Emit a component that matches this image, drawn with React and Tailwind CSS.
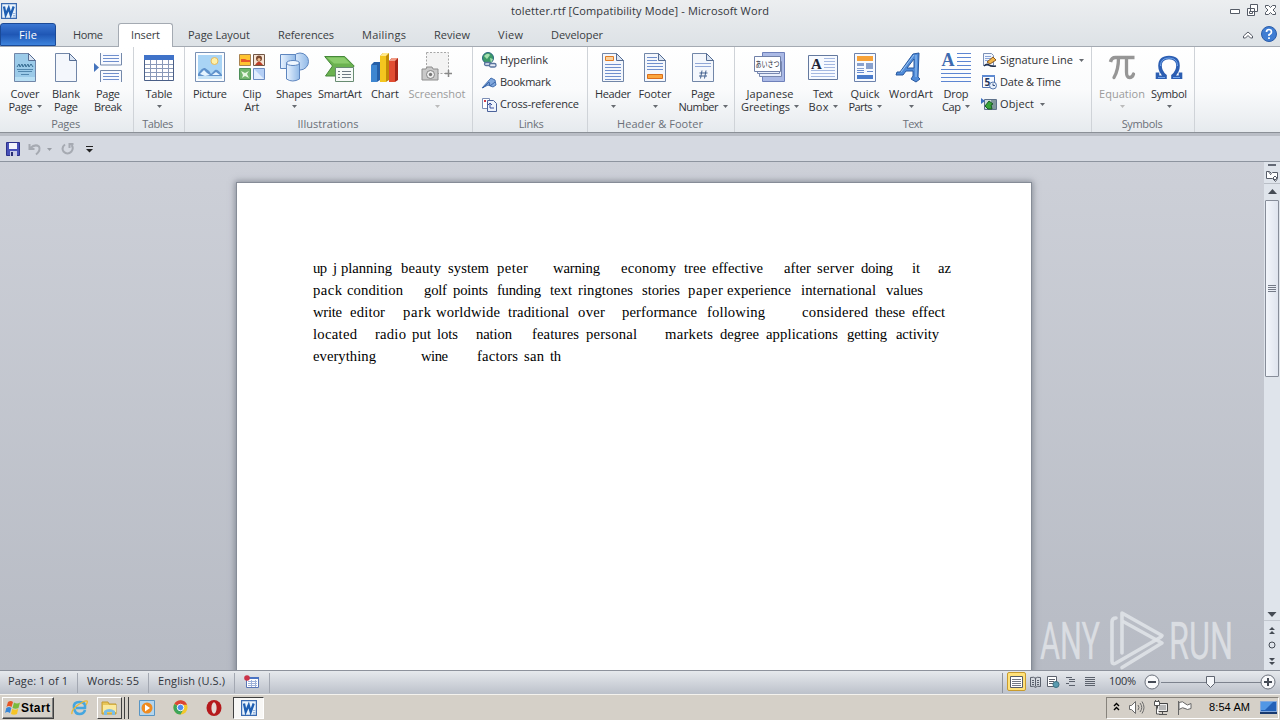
import React, { useLayoutEffect, useRef } from "react";

const UI = "font-['Open_Sans',sans-serif]";

/* Text run whose tracking is adjusted so that it spans exactly `w` pixels. */
function Fit({ w, className = "", children }) {
  const ref = useRef(null);
  useLayoutEffect(() => {
    const el = ref.current;
    el.style.letterSpacing = "0px";
    el.style.width = "auto";
    const natural = el.getBoundingClientRect().width;
    const n = String(children).length;
    if (n > 1) el.style.letterSpacing = (w - natural) / (n - 1) + "px";
    el.style.width = w + "px";
  }, [w, children]);
  return (
    <span ref={ref} className={"inline-block whitespace-pre shrink-0 " + className}>
      {children}
    </span>
  );
}

function Arrow({ className = "" }) {
  return (
    <svg className={"inline-block shrink-0 " + className} width="5" height="3" viewBox="0 0 5 3">
      <path d="M0 0h5L2.500 3z" fill="currentColor" />
    </svg>
  );
}

const Svg = ({ s = 32, children }) => (
  <svg width={s} height={s} viewBox={`0 0 ${s} ${s}`} className="shrink-0">{children}</svg>
);

function Sheet({ x = 5, fill = "#f4f7fc", children }) {
  return (
    <>
      <path d={`M${x}.5 1.500h14l7 7v21h-21z`} fill={fill} stroke="#7186a8" />
      <path d={`M${x + 14}.5 1.500v7h7z`} fill="#dbe5f3" stroke="#566d93" />
      {children}
    </>
  );
}

const CoverIcon = () => (
  <Svg><Sheet fill="#9ccbe9">
    <path d="M8 15l2-3 1 3 2-3 1 3 2-3 1 3 2-3 1 3 2-3 2 3" stroke="#376d93" fill="none" />
    <path d="M8 17.500h16M9 19.500h14M12 22.500h8" stroke="#5388ae" />
    <path d="M6 25h20v4H6z" fill="#b8dff4" />
  </Sheet></Svg>
);
const BlankIcon = () => <Svg><Sheet /></Svg>;
const BreakIcon = () => (
  <Svg>
    <path d="M8.500 1v12h21V1M8.500 30V18.500h21V30" fill="#f8faff" stroke="#7489ab" />
    <path d="M11 3.500h16M11 6.500h16M11 9.500h16M11 21.500h16M11 24.500h16M11 27.500h16" stroke="#6f8fcd" />
    <path d="M2 11l5 4.500L2 20z" fill="#4574bd" />
  </Svg>
);
const TableIcon = () => (
  <Svg>
    <path d="M1.500 3.500h29v25h-29z" fill="#fff" stroke="#4a5f87" />
    <path d="M1 3h30v5H1z" fill="#3f72c8" />
    <path d="M2 12.500h28M2 16.500h28M2 20.500h28M2 24.500h28M7.500 8v20M13.500 8v20M19.500 8v20M25.500 8v20" stroke="#8a99b8" />
  </Svg>
);
const PictureIcon = () => (
  <Svg>
    <path d="M1.500.5h29v29h-29z" fill="#fbfdff" stroke="#7890b4" />
    <path d="M4 3h24v21H4z" fill="#a9d4f5" />
    <circle cx="20.500" cy="9" r="3.500" fill="#fff0a8" stroke="#e5b85c" />
    <path d="M4 22q4-7 7-6 4 2 6 6l4-4q3-1 7 5v2H4z" fill="#5f92cc" />
    <path d="M6 22l4-4 3 3 3 2-5 1zM18 23l4-3 4 3z" fill="#e6f4ff" />
    <path d="M4 24h24v3H4z" fill="#c5e2f7" />
  </Svg>
);
const ClipIcon = () => (
  <Svg>
    <path d="M3.500 2.500h11v11h-11z" fill="#ffc431" stroke="#a98250" />
    <path d="M5 7h4l2 1h3v2H5z" fill="#e7572a" />
    <path d="M17.500 2.500h11v11h-11z" fill="#f5e3d4" stroke="#715746" />
    <circle cx="23" cy="6.500" r="3" fill="#7c4a30" /><path d="M19 13q4-7 8 0z" fill="#bc3e27" /><circle cx="23" cy="7.500" r="1.500" fill="#f1bd8d" />
    <path d="M3.500 16.500h11v11h-11z" fill="#72b56d" stroke="#4d8f59" />
    <path d="M5 19l4 2 4-2-2 3 2 4-4-2-3 2 1-3z" fill="#e7f7e2" />
    <path d="M17.500 16.500h11v11h-11z" fill="#b4cff5" stroke="#6b8bc0" /><path d="M18 17l10 10H18z" fill="#e1edfd" />
  </Svg>
);
const ShapesIcon = () => (
  <Svg>
    <defs><linearGradient id="sh"><stop stopColor="#e9f3ff" /><stop offset="1" stopColor="#91b9e7" /></linearGradient></defs>
    <circle cx="22" cy="9.500" r="8.500" fill="url(#sh)" stroke="#5e86bf" />
    <path d="M2.500 2.500h15v14h-15z" fill="url(#sh)" stroke="#5e86bf" />
    <path d="M8.500 11v16q6 4 13 0V11z" fill="url(#sh)" stroke="#5e86bf" />
    <ellipse cx="15" cy="11" rx="6.500" ry="2.500" fill="#f0f7ff" stroke="#5e86bf" />
  </Svg>
);
const SmartIcon = () => (
  <Svg>
    <path d="M.7 4.500h20l9.500 9.500-9 10H1.500l7-10z" fill="#6bb250" stroke="#45883a" />
    <path d="M3 5.500h17l6 6H10z" fill="#8bcc6d" />
    <path d="M11.500 15.500h18v14h-18z" fill="#f6faf7" stroke="#688c72" />
    <path d="M14 19.500h2m2 0h9M14 22.500h2m2 0h9M14 25.500h2m2 0h9" stroke="#6d7b82" />
  </Svg>
);
const ChartIcon = () => (
  <Svg>
    <path d="M2 13l3-3h6v18l-3 2H2z" fill="#255fa8" /><path d="M2 13h6v17H2z" fill="#3e86d0" />
    <path d="M11 4l3-3h6v27l-3 2h-6z" fill="#c28c05" /><path d="M11 4h6v26h-6z" fill="#f4c61f" /><path d="M11 4l3-3h6l-3 3z" fill="#ffe98b" />
    <path d="M20 9l3-3h6v22l-3 2h-6z" fill="#a62416" /><path d="M20 9h6v21h-6z" fill="#e24d31" /><path d="M20 9l3-3h6l-3 3z" fill="#f29a83" />
  </Svg>
);
const ScreenshotIcon = () => (
  <Svg>
    <path d="M5.500.5h22v21h-22z" fill="#f3f3f3" stroke="#a6a6a6" strokeDasharray="2 1.500" />
    <path d="M1 17h4l1-2h5l1 2h5v11H1z" fill="#c9c9c9" stroke="#8d8d8d" />
    <circle cx="9.500" cy="22.500" r="4" fill="#eee" stroke="#858585" /><circle cx="9.500" cy="22.500" r="1.700" fill="#777" />
    <path d="M27.500 18v7M24 21.500h7" stroke="#888" strokeWidth="1.500" />
  </Svg>
);
const PageLines = ({ from, to }) => {
  const rows = [];
  for (let y = from; y <= to; y += 3) rows.push(<path key={y} d={`M8 ${y + 0.5}h16`} stroke="#6f8fcd" />);
  return rows;
};
const HeaderIcon = () => <Svg><Sheet><PageLines from={12} to={27} /><path d="M8.500 4.500h8v4h-8z" fill="#fbd29e" stroke="#e07c25" /></Sheet></Svg>;
const FooterIcon = () => <Svg><Sheet><path d="M8 5.500h10M8 8.500h10" stroke="#6f8fcd" /><PageLines from={11} to={18} /><path d="M8.500 22.500h15v4h-15z" fill="#fba63f" stroke="#d96e1c" /></Sheet></Svg>;
const NumberIcon = () => <Svg><Sheet><path d="M8 11.500h16M8 14.500h16" stroke="#91a7d6" /><path d="M15 18.500l-1.500 8M19 18.500l-1.500 8M12.500 21h8M12 24h8" stroke="#42618f" /></Sheet></Svg>;
const JapaneseIcon = () => (
  <Svg>
    <path d="M8.500.5h22v29h-22z" fill="#aab9e5" stroke="#6e80ba" />
    <path d="M5.500 9.500h22v15h-22z" fill="#e8eefb" stroke="#7787b0" /><path d="M3.500 7.500h22v14h-22z" fill="#e8eefb" stroke="#7787b0" />
    <path d="M.5 4.500h26v15H.5z" fill="#fdfeff" stroke="#7080a8" />
    <text x="1.500" y="15" fontSize="8" textLength="24" lengthAdjust="spacingAndGlyphs" fontFamily="Noto Sans CJK JP, sans-serif" fill="#1c2233">あいさつ</text>
  </Svg>
);
const TextBoxIcon = () => (
  <Svg>
    <path d="M1.500 3.500h29v24h-29z" fill="#f7faff" stroke="#64799f" />
    <text x="4" y="17" fontSize="15" fontWeight="700" fontFamily="Liberation Serif, serif" fill="#1b2438">A</text>
    <path d="M17 6.500h11M17 9.500h11M17 12.500h11M17 15.500h11M4 18.500h24M4 21.500h24M4 24.500h24" stroke="#a4b8e1" />
  </Svg>
);
const QuickIcon = () => (
  <Svg>
    <path d="M5.500 1.500h21v28h-21z" fill="#f7faff" stroke="#6c82ac" />
    <path d="M8 4h16v5H8z" fill="#f7a238" /><path d="M8 11h7v3H8zM17 11h7v6h-7zM8 16h7v1H8z" fill="#88a1ce" />
    <path d="M8 18.500h7M18 19.500h6M8 20.500h7" stroke="#688bce" /><path d="M8 23h16v4H8z" fill="#497bcb" />
  </Svg>
);
const WordArtIcon = () => (
  <Svg>
    <path d="M2 20h3L18 2l6-1-1 24 2 2-4 3-5-3 2-3v-5h-7l-3 4H1zM12 16h7V7z" fill="#4f8bd8" stroke="#2859a0" fillRule="evenodd" />
    <path d="M6 20L19 3M21 3v22" fill="none" stroke="#9cc6f3" />
  </Svg>
);
const DropCapIcon = () => (
  <Svg>
    <text x="1.500" y="14" fontSize="18" fontWeight="700" fontFamily="Liberation Serif, serif" fill="#3d6bb0">A</text>
    <path d="M17 1.500h14M17 5.500h14M17 9.500h14M17 13.500h14M1 17.500h30M1 21.500h30M1 25.500h30M1 29.500h30" stroke="#5d86d2" />
  </Svg>
);
const PiIcon = () => (
  <Svg>
    <path d="M4.500 10q1-4.500 5-4.500h19" stroke="#969696" strokeWidth="3.500" fill="none" />
    <path d="M12.500 6q0 12-4.500 19.500M20.500 6v14q0 5.500 3 5.500t4-3.500" stroke="#969696" strokeWidth="3.300" strokeLinecap="round" fill="none" />
  </Svg>
);
const OmegaIcon = () => (
  <Svg>
    <path d="M4.500 20.500v4.800h7.500v-1.500q-5-4-5-10Q7 5.500 16 5.500t9 8.300q0 6-5 10v1.500h7.500v-4.800" stroke="#2c5eb2" strokeWidth="3.600" fill="none" />
    <path d="M5 25.500h7M7.500 14Q7.500 6 16 6t8.500 8M20 25.500h7" stroke="#6ea3ec" fill="none" />
  </Svg>
);

const LinkIcon = () => (
  <Svg s={16}>
    <circle cx="7" cy="6" r="5.500" fill="#3c9a68" stroke="#2a6780" /><path d="M3 4q4-4 6-1L6 7zM9 6l3 1-2 4z" fill="#a4dfae" />
    <rect x="3.500" y="10.500" width="6" height="3" rx="1.500" fill="#e4ebf6" stroke="#59749e" strokeWidth="1.300" />
    <rect x="8.500" y="11.500" width="6.500" height="3.500" rx="1.500" fill="#e4ebf6" stroke="#59749e" strokeWidth="1.300" />
  </Svg>
);
const BookmarkIcon = () => (
  <Svg s={16}><path d="M1 14L10 4l4 2 1 5-3 2-5-2z" fill="#7fa7dd" stroke="#4570af" /><path d="M2 14l6-6 1 4 5-4" fill="none" stroke="#3a65a8" /></Svg>
);
const CrossIcon = () => (
  <Svg s={16}>
    <path d="M1.500 2.500h7v10h-7z" fill="#fff" stroke="#7b8db5" /><path d="M3 4h2v2H3z" fill="#d13a46" />
    <path d="M6.500 4.500h6l3 3v8h-9z" fill="#eef3fc" stroke="#4c639b" /><path d="M9 12V8m-2 1l2-2 2 2M9 12h4" stroke="#3850a0" fill="none" />
  </Svg>
);
const SignIcon = () => (
  <Svg s={16}>
    <path d="M2.500 1.500h8l2 2v10h-10z" fill="#f2f6fd" stroke="#7b90b6" /><path d="M4 4.500h6M4 6.500h6M4 8.500h4" stroke="#89a4d8" />
    <path d="M6 10l6-5 3 3-6 4z" fill="#f3b64b" stroke="#8a5b24" /><path d="M3 14q3-3 5-1t7 1" stroke="#222f48" fill="none" strokeWidth="1.500" />
  </Svg>
);
const DateIcon = () => (
  <Svg s={16}>
    <path d="M1.500 1.500h12v12h-12z" fill="#f9fbff" stroke="#5373b2" /><path d="M1 1h13v2H1z" fill="#5e8ad2" />
    <text x="3.500" y="12" fontSize="10" fontWeight="700" fontFamily="Open Sans, sans-serif" fill="#22345c">5</text>
    <circle cx="12" cy="11.500" r="3.500" fill="#e8f0fb" stroke="#5577ad" /><path d="M12 9.500v2h2" stroke="#35517f" fill="none" />
  </Svg>
);
const ObjectIcon = () => (
  <Svg s={16}>
    <path d="M3.500 3.500h12v10h-12z" fill="#cdd8dd" stroke="#5e718b" /><path d="M10 4h5v9h-5z" fill="#80979d" />
    <path d="M0 2l4 3-4 3z" fill="#3e6fc0" /><path d="M8 5l4 3-2 1 1 4H7l-3-3z" fill="#38a438" stroke="#185c23" />
  </Svg>
);

/* Each label line is [text, width]; `arrow` is "below", "inline" or absent. */
const groups = [
  { w: "w-[134px] pl-[4px]", label: ["Pages", 29], items: [
    { w: "w-[42px]", icon: CoverIcon, lines: [["Cover", 29], ["Page", 24]], arrow: "inline" },
    { w: "w-[40px]", icon: BlankIcon, lines: [["Blank", 28], ["Page", 24]] },
    { w: "w-[44px]", icon: BreakIcon, lines: [["Page", 24], ["Break", 28]] } ] },
  { w: "w-[51px] pl-[3px]", label: ["Tables", 31], items: [
    { w: "w-[44px]", icon: TableIcon, lines: [["Table", 27]], arrow: "below" } ] },
  { w: "w-[288px] pl-[5px]", label: ["Illustrations", 61], items: [
    { w: "w-[40px]", icon: PictureIcon, lines: [["Picture", 34]] },
    { w: "w-[44px]", icon: ClipIcon, lines: [["Clip", 19], ["Art", 15]] },
    { w: "w-[40px]", icon: ShapesIcon, lines: [["Shapes", 36]], arrow: "below" },
    { w: "w-[52px]", icon: SmartIcon, lines: [["SmartArt", 44]] },
    { w: "w-[38px]", icon: ChartIcon, lines: [["Chart", 28]] },
    { w: "w-[66px]", icon: ScreenshotIcon, lines: [["Screenshot", 57]], arrow: "below", off: true } ] },
  { w: "w-[115px] pl-[8px]", label: ["Links", 25], stack: [
    { icon: LinkIcon, line: ["Hyperlink", 48] }, { icon: BookmarkIcon, line: ["Bookmark", 51] },
    { icon: CrossIcon, line: ["Cross-reference", 79] } ] },
  { w: "w-[147px] pl-[4px]", label: ["Header & Footer", 86], items: [
    { w: "w-[42px]", icon: HeaderIcon, lines: [["Header", 36]], arrow: "below" },
    { w: "w-[42px]", icon: FooterIcon, lines: [["Footer", 33]], arrow: "below" },
    { w: "w-[54px]", icon: NumberIcon, lines: [["Page", 24], ["Number", 40]], arrow: "inline" } ] },
  { w: "w-[357px] pl-[5px]", label: ["Text", 20], items: [
    { w: "w-[60px]", icon: JapaneseIcon, lines: [["Japanese", 47], ["Greetings", 49]], arrow: "inline" },
    { w: "w-[46px]", icon: TextBoxIcon, lines: [["Text", 20], ["Box", 20]], arrow: "inline" },
    { w: "w-[38px]", icon: QuickIcon, lines: [["Quick", 29], ["Parts", 24]], arrow: "inline" },
    { w: "w-[54px]", icon: WordArtIcon, lines: [["WordArt", 44]], arrow: "below" },
    { w: "w-[36px]", icon: DropCapIcon, lines: [["Drop", 25], ["Cap", 19]], arrow: "inline" } ],
    stack: [
      { icon: SignIcon, line: ["Signature Line", 73], arrow: true }, { icon: DateIcon, line: ["Date & Time", 61] },
      { icon: ObjectIcon, line: ["Object", 34], arrow: true } ] },
  { w: "w-[103px] pl-[4px]", label: ["Symbols", 41], items: [
    { w: "w-[52px]", icon: PiIcon, lines: [["Equation", 46]], arrow: "below", off: true },
    { w: "w-[42px]", icon: OmegaIcon, lines: [["Symbol", 36]], arrow: "below" } ] },
];

function BigButton({ w, icon: Icon, lines, arrow, off }) {
  return (
    <div className={"flex flex-col items-center shrink-0 pt-[5px] " + w + (off ? " text-[#9b9b9b]" : " text-[#2f3135]")}>
      <Icon />
      <div className="mt-[3px] h-[13px] leading-[13px]"><Fit w={lines[0][1]}>{lines[0][0]}</Fit></div>
      <div className="h-[13px] leading-[13px] flex items-center gap-[4px]">
        {lines[1] && <Fit w={lines[1][1]}>{lines[1][0]}</Fit>}
        {arrow && <Arrow className={off ? "text-[#bbb]" : "text-[#666a70]"} />}
      </div>
    </div>
  );
}

const doc = [
  [["up", 313, 327], ["j", 333, 337], ["planning", 341, 392], ["beauty", 401, 441], ["system", 448, 489], ["peter", 497, 528], ["warning", 553, 600], ["economy", 621, 676], ["tree", 684, 706], ["effective", 712, 763], ["after", 784, 811], ["server", 817, 854], ["doing", 861, 893], ["it", 912, 920], ["az", 938, 951]],
  [["pack", 313, 342], ["condition", 347, 403], ["golf", 424, 447], ["points", 453, 488], ["funding", 497, 541], ["text", 550, 572], ["ringtones", 578, 633], ["stories", 642, 680], ["paper", 688, 723], ["experience", 727, 791], ["international", 801, 876], ["values", 886, 923]],
  [["write", 313, 342], ["editor", 350, 385], ["park", 403, 431], ["worldwide", 436, 500], ["traditional", 508, 569], ["over", 578, 605], ["performance", 622, 697], ["following", 707, 765], ["considered", 802, 868], ["these", 875, 905], ["effect", 912, 945]],
  [["located", 313, 357], ["radio", 375, 406], ["put", 412, 431], ["lots", 437, 458], ["nation", 476, 512], ["features", 532, 579], ["personal", 586, 637], ["markets", 665, 713], ["degree", 720, 759], ["applications", 766, 838], ["getting", 847, 887], ["activity", 896, 939]],
  [["everything", 313, 376], ["wine", 421, 448], ["factors", 477, 518], ["san", 524, 544], ["th", 550, 561]],
];

const tabs = [["Home", 30, "ml-[17px]"], ["Insert", 29, ""], ["Page Layout", 62, "ml-[15px]"], ["References", 56, "ml-[28px]"], ["Mailings", 44, "ml-[28px]"], ["Review", 36, "ml-[28px]"], ["View", 25, "ml-[28px]"], ["Developer", 52, "ml-[28px]"]];

function WordLogo() {
  return (
    <svg width="16" height="16" viewBox="0 0 16 16" className="shrink-0">
      <path d="M.6.600h14.800v14.800H.6z" fill="#eaf4fd" stroke="#3a6ab0" strokeWidth="1.200" />
      <path d="M12 12.500h2.500M12 14h2.500M12 10.500h2.500" stroke="#9bb8df" />
      <path d="M3 3.500l1.700 8.500L7.700 5l2 7 3-8.500" fill="none" stroke="#1f5fb2" strokeWidth="2.300" />
    </svg>
  );
}

function Ribbon() {
  return (
    <div className="h-[86px] flex bg-linear-to-b from-white via-[#fafbfc] to-[#e6eaee] border-b border-[#8b9097] text-[11px]">
      {groups.map((g) => (
        <div key={g.label[0]} className={"shrink-0 h-[85px] flex flex-col border-r border-[#cfd3d8] " + g.w}>
          <div className="flex h-[70px]">
            {g.items && g.items.map((b, i) => <BigButton key={i} {...b} />)}
            {g.stack && (
              <div className={"flex flex-col pt-[2px] " + (g.items ? "ml-[7px]" : "")}>
                {g.stack.map(({ icon: Icon, line, arrow }) => (
                  <div key={line[0]} className="h-[22px] flex items-center text-[#2f3135]">
                    <Icon />
                    <Fit w={line[1]} className="ml-[3px] leading-[14px]">{line[0]}</Fit>
                    {arrow && <Arrow className="ml-[6px] text-[#666a70]" />}
                  </div>
                ))}
              </div>
            )}
          </div>
          <div className="h-[13px] leading-[13px] text-center text-[#6b7078] pr-[6px]"><Fit w={g.label[1]}>{g.label[0]}</Fit></div>
        </div>
      ))}
    </div>
  );
}

function Scrollbar() {
  return (
    <div className="w-[16px] shrink-0 h-full bg-[#dfe4eb] flex flex-col items-center text-[#454b54]">
      <div className="h-[22px] w-full flex flex-col items-center border-b border-[#b9bec6]">
        <div className="mt-[2px] w-[8px] h-[2px] bg-[#636975]" />
        <svg className="mt-[4px]" width="12" height="12" viewBox="0 0 12 12"><path d="M.5 1.500h3l2 2 1-1h5v6l-2 3-3-3h-6zM2 1l3 4M7 8l2-2 2 2-2 2z" fill="#fff" stroke="#565c68" /></svg>
      </div>
      <svg className="mt-[5px]" width="9" height="5" viewBox="0 0 9 5"><path d="M4.500 0L9 5H0z" fill="currentColor" /></svg>
      <div className="mt-[6px] w-[14px] h-[177px] shrink-0 border border-[#878d99] rounded-[1px] bg-linear-to-r from-[#f3f6fb] to-[#dfe4ee] flex flex-col gap-[1px] items-center justify-center">
        <div className="w-[8px] h-px bg-[#747a87]" /><div className="w-[8px] h-px bg-[#747a87]" /><div className="w-[8px] h-px bg-[#747a87]" /><div className="w-[8px] h-px bg-[#747a87]" />
      </div>
      <div className="flex-1" />
      <svg width="16" height="58" viewBox="0 0 16 58">
        <path d="M3.500 0h9L8 5z" fill="currentColor" /><path d="M0 8.500h16" stroke="#c3c8d0" />
        <path d="M5 18l3-3 3 3zM5 22l3-3 3 3z" fill="currentColor" />
        <circle cx="8" cy="33" r="3" fill="none" stroke="currentColor" />
        <path d="M5 46l3 3 3-3zM5 50l3 3 3-3z" fill="currentColor" />
      </svg>
    </div>
  );
}

function Watermark() {
  return (
    <svg className="absolute left-[1035px] top-[445px]" width="215" height="63" viewBox="1035 607 215 63">
      <g fill="#e1e4e8" fillOpacity=".85" stroke="#e1e4e8" strokeOpacity=".4" strokeWidth=".5" fontFamily="Roboto, sans-serif" fontWeight="400" fontSize="51">
        <text x="1040" y="659" textLength="60" lengthAdjust="spacingAndGlyphs">ANY</text>
        <text x="1169" y="659" textLength="64" lengthAdjust="spacingAndGlyphs">RUN</text>
      </g>
      <g fill="none" stroke="#dfe2e7" strokeOpacity=".9" strokeWidth="3.600" strokeLinejoin="round" strokeLinecap="round">
        <path d="M1122 653v-40l40 22.500" />
        <path d="M1116 618q-4 0-4 4v39q0 4 4 2l45-26" />
        <path d="M1124 622l38 21-40 24.500" />
      </g>
    </svg>
  );
}

function StatusBar() {
  return (
    <div className="h-[24px] flex items-center border-t border-[#8d929c] bg-linear-to-b from-[#e6e9ed] to-[#bcc1ca] text-[11px] text-[#30343b]">
      <div className="w-[78px] h-[20px] pl-[8px] pb-[2px] flex items-center border-r border-[#a3a8b2]"><Fit w={60}>Page: 1 of 1</Fit></div>
      <div className="w-[71px] h-[20px] pl-[9px] pb-[2px] flex items-center border-r border-[#a3a8b2]"><Fit w={52}>Words: 55</Fit></div>
      <div className="w-[86px] h-[20px] pl-[9px] pb-[2px] flex items-center border-r border-[#a3a8b2]"><Fit w={67}>English (U.S.)</Fit></div>
      <div className="w-[35px] h-[20px] pl-[9px] pb-[2px] flex items-center border-r border-[#a3a8b2]">
        <svg width="15" height="14" viewBox="0 0 15 14"><path d="M2.500 2.500h12v10h-12z" fill="#fff" stroke="#5a76b5" /><path d="M2 2h13v2H2z" fill="#4b74c4" /><path d="M4 6.500h9M4 8.500h9M4 10.500h9M7.500 5v7M11.500 5v7" stroke="#9fb2da" /><circle cx="3" cy="3" r="2.800" fill="#cc3348" /></svg>
      </div>
      <div className="flex-1" />
      <div className="h-[20px] w-px bg-[#8d929c]" />
      <div className="ml-[4px] mb-[2px] w-[19px] h-[19px] rounded-[2px] border border-[#c89b2e] bg-[#ffe27b] flex items-center justify-center">
        <svg width="13" height="12" viewBox="0 0 13 12"><path d="M.5.500h12v11H.5z" fill="#fff" stroke="#555b66" /><path d="M2 3.500h9M2 5.500h9M2 7.500h9M2 9.500h9" stroke="#737984" /></svg>
      </div>
      <svg className="ml-[3px] mb-[2px]" width="71" height="14" viewBox="0 0 71 14" fill="none" stroke="#5b616c">
        <path d="M6.500 2.500v9m-5-9q4-1 5 1 1-2 5-1v9q-4-1-5 1-1-2-5-1zM3 5.500h2m3 0h2m-7 2h2m3 0h2m-7 2h2m3 0h2" />
        <path d="M18.500 1.500h9v10h-9zM20 4.500h6m-6 2h5m-5 2h4" fill="#fff" /><circle cx="27" cy="9.500" r="3" fill="#5a9bb0" stroke="#3b7181" />
        <path d="M37 2.500h6m-3 2h6m-6 2h6m-9 2h3m0 2h6" /><path d="M56 2.500h10m-10 2h10m-10 2h10m-10 2h10m-10 2h10" />
      </svg>
      <Fit w={27} className="ml-[9px] mb-[2px]">100%</Fit>
      <svg className="ml-[8px] mr-[3px] mb-[2px]" width="133" height="18" viewBox="0 0 133 18" fill="none">
        <path d="M17 9.500h100" stroke="#7c828d" />
        <circle cx="8" cy="9" r="7" fill="#f7f8fa" stroke="#6b717c" /><path d="M4 9h8" stroke="#444a55" strokeWidth="2" />
        <path d="M62.500 3.500h8v7l-4 4-4-4z" fill="#f5f7fa" stroke="#5f6570" />
        <circle cx="124" cy="9" r="7" fill="#f7f8fa" stroke="#6b717c" /><path d="M120 9h8M124 5v8" stroke="#444a55" strokeWidth="2" />
      </svg>
    </div>
  );
}

function Taskbar() {
  return (
    <div className="h-[26px] flex items-center bg-[#d5d0c8] border-t border-[#f4f2ee] text-black">
      <div className="ml-[2px] w-[52px] h-[22px] pl-[2px] flex items-center border border-t-white border-l-white border-r-[#404040] border-b-[#404040] shadow-[inset_-1px_-1px_0_#808080]">
        <svg width="16" height="16" viewBox="0 0 16 16"><path d="M3 2q3-2 5 0L6.500 7q-3-2-5 0z" fill="#e65525" /><path d="M9 2.500q3 2 6 0L13.500 8q-3 1.500-6 0z" fill="#7aba3c" /><path d="M1.300 8q3-2 5 0L5 13q-3-2-5 0z" fill="#3787d8" /><path d="M7.200 8.700q3 2 6 0L12 14q-3 1.500-6 0z" fill="#f6c425" /></svg>
        <Fit w={29} className="font-bold text-[12px] font-['Liberation_Sans',sans-serif]">Start</Fit>
      </div>
      <svg className="ml-[17px]" width="17" height="17" viewBox="0 0 17 17"><path d="M14 11q-1 4-5.500 4T3 9t5.500-6T14 9H5" fill="none" stroke="#45a6df" strokeWidth="2.600" /><path d="M1 15q-1-4 6-9t9-4q1 1-1 4" fill="none" stroke="#e9b834" strokeWidth="1.300" /></svg>
      <div className="ml-[9px] w-[25px] h-[22px] flex items-center justify-center border border-t-white border-l-white border-r-[#404040] border-b-[#404040]">
        <svg width="17" height="16" viewBox="0 0 17 16"><path d="M1 2h6l1 2h7v10H1z" fill="#e8c659" stroke="#c39b31" /><path d="M2 5h13v7H2z" fill="#fae99d" /><path d="M3 15v-4q5-4 11 0v4h-3v-3H6v3z" fill="#78bde7" /></svg>
      </div>
      <div className="w-[3px] h-[22px] border-r border-[#404040]" /><div className="w-[4px] h-[22px] border-r border-[#404040]" />
      <svg className="ml-[10px]" width="16" height="16" viewBox="0 0 16 16"><path d="M.5.500h15v15H.5z" fill="#b4d5ed" stroke="#5895c4" /><circle cx="8" cy="8" r="5.500" fill="#ef8b20" /><path d="M6 4.500l5 3.500-5 3.500z" fill="#fff" /></svg>
      <svg className="ml-[18px]" width="15" height="15" viewBox="0 0 16 16"><circle cx="8" cy="8" r="7.500" fill="#f3c82d" /><path d="M8 8L1.500 4A7.500 7.500 0 0 1 15 5H8z" fill="#db4437" /><path d="M8 8L1.500 4.200A7.500 7.500 0 0 0 8 15.500L11 10z" fill="#3ea55a" /><circle cx="8" cy="8" r="3.500" fill="#4d8df0" stroke="#fff" /></svg>
      <svg className="ml-[18px]" width="16" height="16" viewBox="0 0 16 16"><ellipse cx="8" cy="8" rx="7.500" ry="8" fill="#b5191c" /><ellipse cx="8" cy="8" rx="2.600" ry="5.800" fill="#e4d9d5" /></svg>
      <div className="ml-[11px] w-[31px] h-[22px] bg-[#f8f7f5] border border-t-[#404040] border-l-[#404040] border-r-white border-b-white flex items-center justify-center"><WordLogo /></div>
      <div className="flex-1" />
      <div className="w-[173px] mr-[1px] h-[22px] border border-t-[#87837c] border-l-[#87837c] border-r-white border-b-white flex items-center">
        <svg className="ml-[6px] mb-[2px]" width="7" height="10" viewBox="0 0 7 10"><path d="M1 4l2.500-2.500L6 4M1 8l2.500-2.500L6 8" fill="none" stroke="#000" strokeWidth="1.400" /></svg>
        <svg className="ml-[8px]" width="17" height="15" viewBox="0 0 17 15" fill="none" stroke="#6b6b6b"><path d="M1.500 5.500h2l4-4v12l-4-4h-2z" fill="#fff" /><path d="M10 5q2 2.500 0 5M12 3q3.500 4.500 0 9M14 1.500q4 6 0 12" /></svg>
        <svg className="ml-[8px]" width="16" height="16" viewBox="0 0 16 16" fill="none" stroke="#555"><path d="M4.500 3.500h10v8h-10z" fill="#b5b5b5" stroke="#444" /><path d="M5.500 4.500h8v6h-8z" stroke="#eee" /><path d="M6 14.500h8M9.500 12v2" /><path d="M1.500 1.500h5v4h-5zM2.500 0v2m3-2v2M3.500 6v8h3" fill="#fff" /></svg>
        <svg className="ml-[8px]" width="16" height="16" viewBox="0 0 16 16"><path d="M1.500 1v14M2 2.500q4-2 6 1t6 0v5q-4 2-6 0t-6 1z" fill="#fff" stroke="#666" /></svg>
        <Fit w={41} className="ml-[16px] text-[11px] font-['Liberation_Sans',sans-serif]">8:54 AM</Fit>
        <svg className="ml-[10px]" width="17" height="13" viewBox="0 0 17 13"><path d="M.5.500h16v10H.5z" fill="#2361b8" stroke="#82a8dc" /><path d="M1 1h12L5 9H1z" fill="#5197e5" /><path d="M0 11h17v2H0z" fill="#18396f" /></svg>
      </div>
    </div>
  );
}

export default function App() {
  return (
    <div className={"w-[1280px] h-[720px] overflow-hidden flex flex-col bg-[#d3d7df] " + UI}>
      <div className="h-[47px] shrink-0 bg-linear-to-b from-[#eceef0] to-[#dde2e6] border-b border-[#a4aab2]">
        <div className="h-[23px] flex items-center text-[11px] text-[#33363b]">
          <div className="ml-[1px] mb-[2px]"><WordLogo /></div>
          <Fit w={258} className="ml-[494px] mb-[2px] leading-[14px]">toletter.rtf [Compatibility Mode] - Microsoft Word</Fit>
          <svg className="ml-auto mr-[3px] mb-[4px]" width="48" height="14" viewBox="0 0 48 14" fill="#fff" stroke="#555b66">
            <path d="M1.500 6.500h9v4h-9z" />
            <path d="M21.500 1.500h7v7h-7zM18.500 5.500h7v7h-7z" /><path d="M20.500 8.500h3v2h-3z" />
            <path d="M36.500 2.500h3l2 2 2-2h3v2l-2.500 2.500 2.500 2.500v2h-3l-2-2-2 2h-3v-2l2.500-2.500-2.500-2.500z" />
          </svg>
        </div>
        <div className="h-[24px] flex items-center text-[11px] text-[#3a3d42]">
          <div className="w-[56px] h-[23px] pt-[2px] self-start rounded-t-[3px] border border-[#1b4a97] bg-linear-to-b from-[#3a76d2] via-[#1f57b5] to-[#3e83dc] text-white flex items-center justify-center"><Fit w={18}>File</Fit></div>
          {tabs.map(([t, w, m]) => t === "Insert" ? (
            <div key={t} className="ml-[15px] w-[55px] h-[24px] rounded-t-[3px] border border-b-0 border-[#a4aab2] bg-white flex items-center justify-center"><Fit w={w}>{t}</Fit></div>
          ) : <Fit key={t} w={w} className={m}>{t}</Fit>)}
          <svg className="ml-auto mr-[3px] mb-[2px]" width="36" height="18" viewBox="0 0 36 18">
            <path d="M2.500 11L7 7l4.500 4v2h-2L7 10.500 4.500 13h-2z" fill="#fff" stroke="#555b66" />
            <circle cx="28" cy="9" r="7.500" fill="#3f7dd3" stroke="#2b5da9" />
            <path d="M25.500 7q0-2.500 2.500-2.500T30.500 7q0 1.500-2.500 2.700V11M28 12.300v1.700" fill="none" stroke="#fff" strokeWidth="1.700" />
          </svg>
        </div>
      </div>
      <Ribbon />
      <div className="h-[29px] shrink-0 border-t-[3px] border-t-[#b9bdc5] border-b border-b-[#8d949f] bg-[#d5d9e1] flex items-center">
        <svg className="ml-[6px]" width="14" height="14" viewBox="0 0 14 14"><path d="M.5.500h13v13H.5z" fill="#4750b8" stroke="#2c318b" /><path d="M3 1h8v6H3z" fill="#f3f5fc" /><path d="M4 9h7v5H4z" fill="#c7cae6" /><path d="M5 10h2v4H5z" fill="#272c72" /></svg>
        <svg className="ml-[8px]" width="26" height="14" viewBox="0 0 26 14"><path d="M1.500 2v5h5M2 6.500q5-5 9-2 2 4-3 8" fill="none" stroke="#a6aab2" strokeWidth="2" /><path d="M19 6h5l-2.500 3z" fill="#9a9ea6" /></svg>
        <svg className="ml-[7px]" width="14" height="14" viewBox="0 0 14 14"><path d="M4 2.500q-4 3-1.500 7 4 4 8 0Q13 6 10.500 3M12.500 2h-4v4" fill="none" stroke="#a6aab2" strokeWidth="2" /></svg>
        <svg className="ml-[11px]" width="7" height="8" viewBox="0 0 7 8"><path d="M0 1.500h7" stroke="#222" /><path d="M0 4h7L3.500 7.500z" fill="#222" /></svg>
      </div>
      <div className="relative h-[508px] shrink-0 flex bg-linear-to-b from-[#cdd0d8] to-[#b7bbc4] overflow-hidden">
        <div className="ml-[236px] mt-[20px] w-[796px] h-[500px] shrink-0 bg-white border border-[#868c97] shadow-[0_0_6px_1px_rgba(80,88,100,0.55)] pt-[74px] pl-[76px] font-['Liberation_Serif',serif] text-[14.67px] text-black">
          {doc.map((line, i) => (
            <div key={i} className="flex h-[22px] leading-[22px]">
              {line.map(([t, a, b], j) => (
                <div key={j} className="shrink-0" style={{ marginLeft: a - (j ? line[j - 1][2] : 313) }}>
                  <Fit w={b - a}>{t}</Fit>
                </div>
              ))}
            </div>
          ))}
        </div>
        <div className="flex-1" />
        <Scrollbar />
        <Watermark />
      </div>
      <StatusBar />
      <Taskbar />
    </div>
  );
}
